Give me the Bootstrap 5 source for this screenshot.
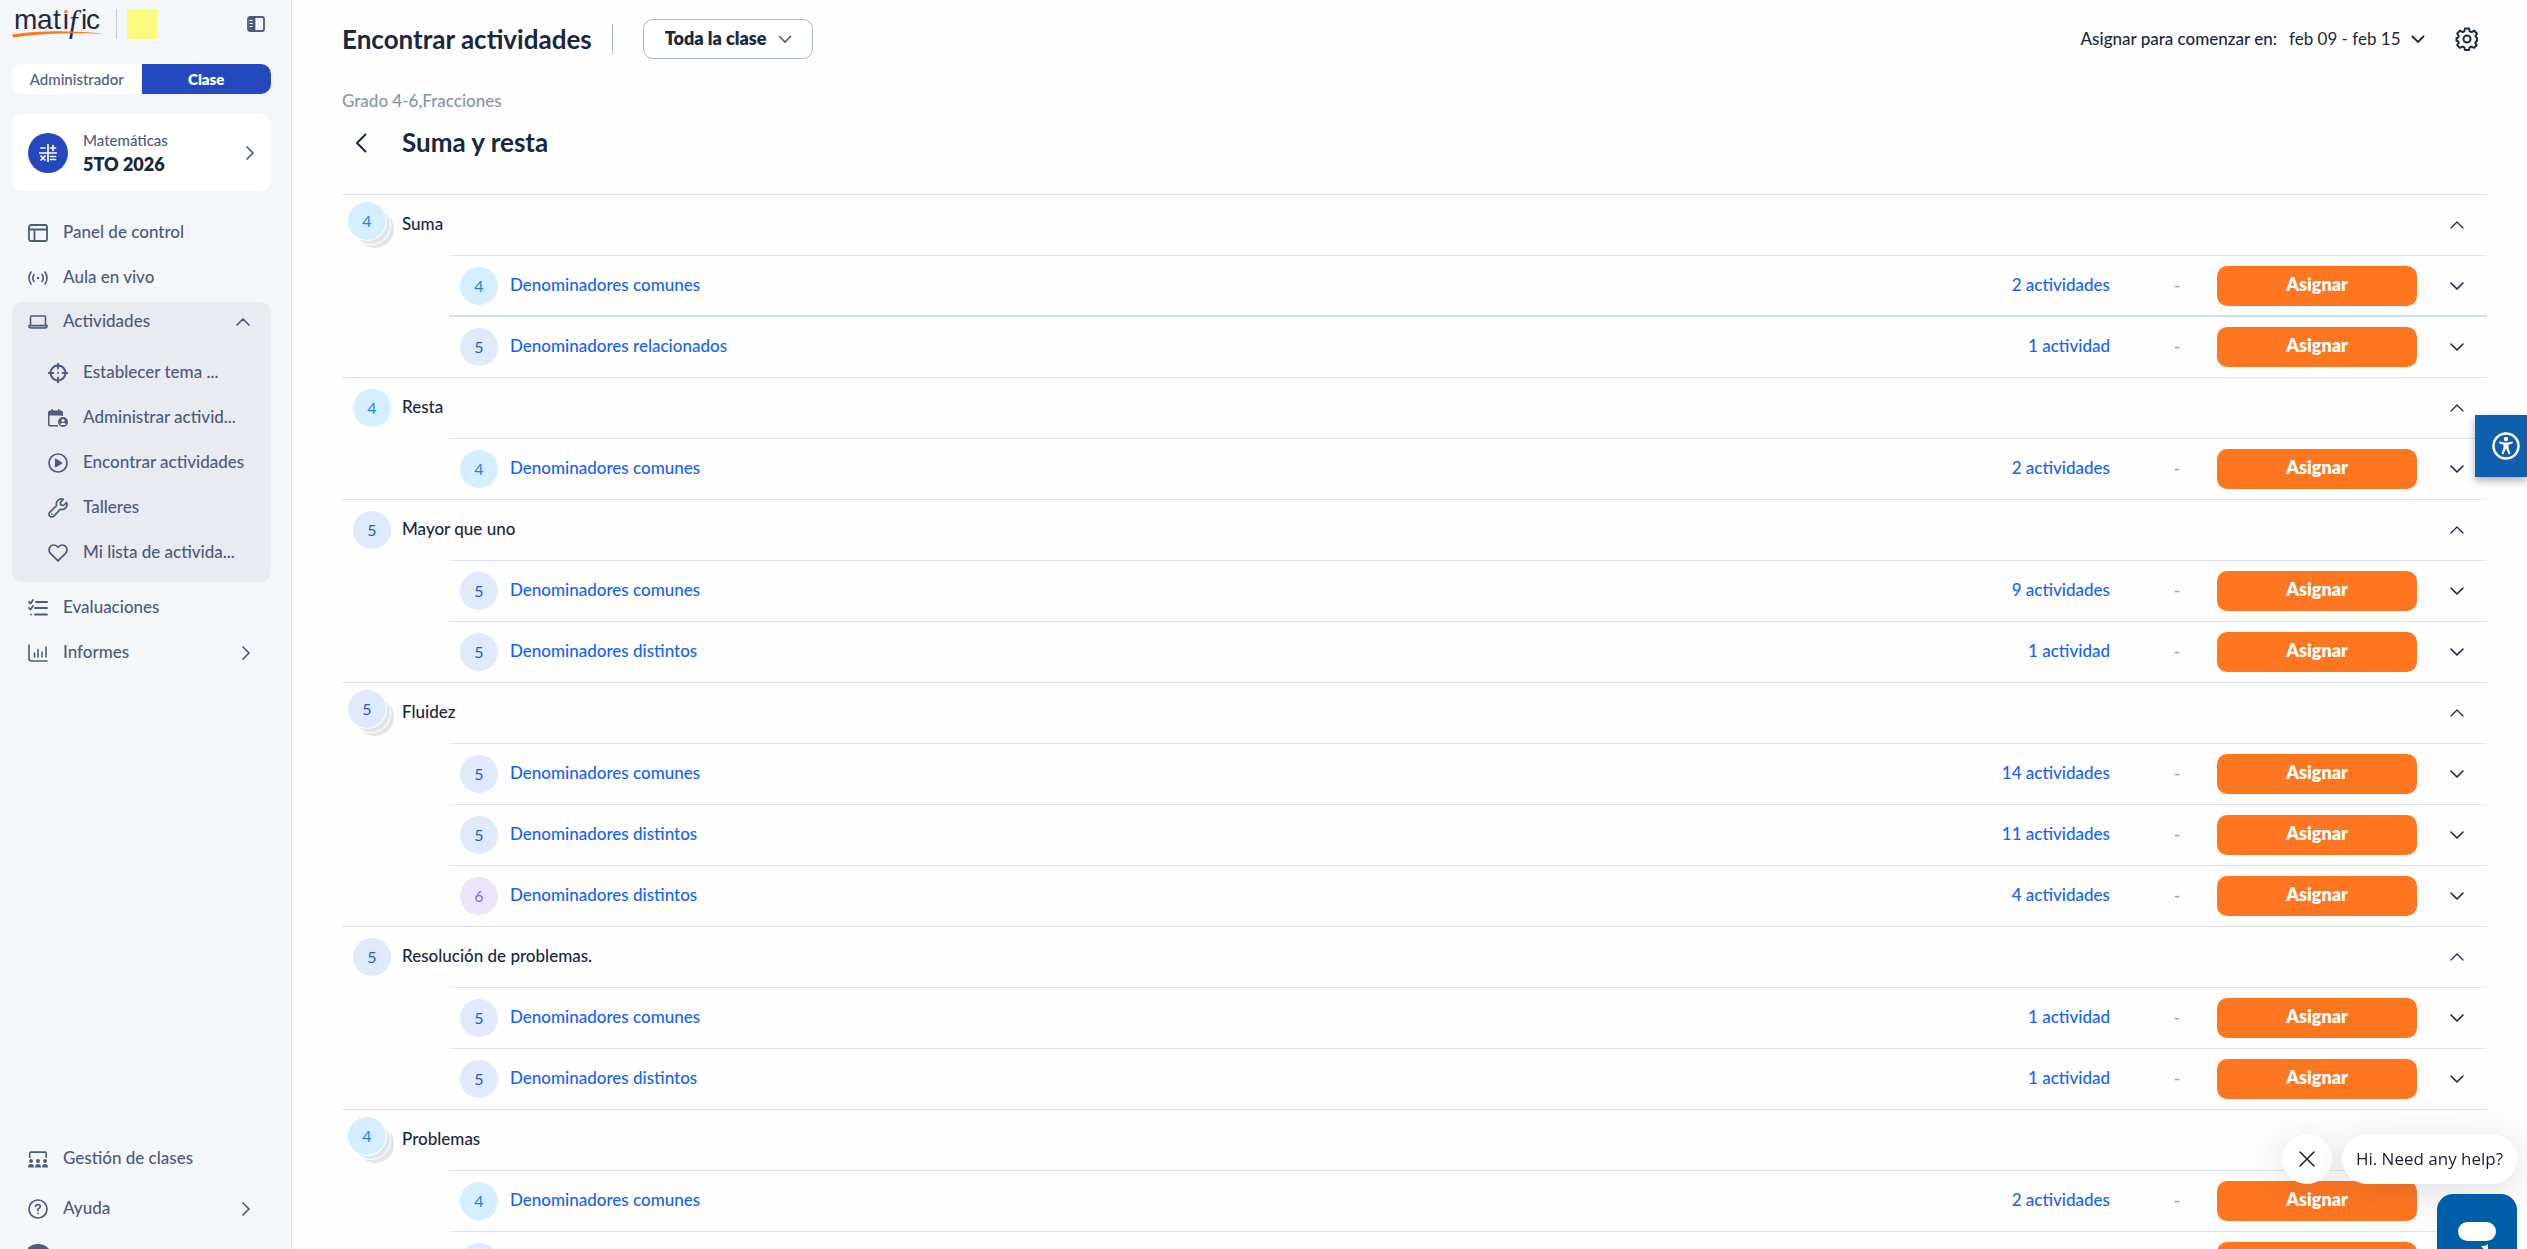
<!DOCTYPE html>
<html lang="es">
<head>
<meta charset="utf-8">
<meta name="viewport" content="width=device-width, initial-scale=1">
<title>Encontrar actividades</title>
<link href="https://cdn.jsdelivr.net/npm/bootstrap@5.3.0/dist/css/bootstrap.min.css" rel="stylesheet">
<style>
:root{--ink:#1a2740;--slate:#4d5b7c;--line:#dfe2e8;--royal:#2449be;--orange:#ff7620;--link:#1463fb}
body{font-family:Lato,"Open Sans",sans-serif;font-size:17px;font-weight:500;line-height:24px;color:var(--ink);background:#fefefe;height:100vh;overflow:hidden}
a{text-decoration:none}
svg{flex:none;display:block}
.ico{fill:none;stroke:currentColor;stroke-linecap:round;stroke-linejoin:round}
.ico:not([stroke-width]){stroke-width:2}
.side{width:292px;padding:9px 20px 0 12px;background:#f3f7fa;border-right:1px solid #dcdfe5;color:var(--slate);overflow:hidden}
.brand-row{height:30px;margin-bottom:25px}
.brand-row svg{overflow:visible}
.brand-rule{width:1px;height:30px;background:#c3c8d2;margin:0 10px 0 11px}
.school{width:30px;height:30px;background:#fafa7d}
.plain{border:0;background:none;padding:0;color:inherit}
.fold{margin:0 6px 0 auto}
.switcher{height:30px;border-radius:10px;overflow:hidden;margin-bottom:20px}
.switcher .btn{border-radius:0;padding:0;font-size:15px;line-height:30px;background:#fff;color:var(--slate);border:0;font-weight:500}
.switcher .btn.active{background:var(--royal);color:#fff;font-weight:800}
.class-card{height:77px;border-radius:10px;background:#fff;padding:0 17px 0 16px;margin-bottom:19px;color:var(--slate)}
.class-card small{font-size:15px}
.class-card strong{font-size:18px;font-weight:800;color:var(--ink)}
.disc{width:40px;height:40px;border-radius:50%;background:var(--royal);color:#fff;margin-right:15px}
.item{height:45px;padding:0 21px 0 16px;gap:15px;color:var(--slate)}
.item span,.line a,.ghead>span,.class-card .flex-column,.heading h2,.crumb{padding-bottom:2px}
.open-box{background:#e8ebf0;border-radius:10px;margin:2px 0 3px;padding-bottom:7px}
.open-box>.item:first-child{height:40px;margin-bottom:8px}
.item.sub{padding:0 14px 0 36px}
.foot{height:115px;overflow:hidden}
.foot .item{height:50px}
.main{padding:19px 40px 0 50px;overflow-y:auto;scrollbar-width:none}
.main::-webkit-scrollbar{display:none}
.top{height:40px;margin-bottom:30px}
h1,h2{font-size:26px;line-height:30px;font-weight:700;margin:0}
.top-rule{width:1px;height:30px;background:#aab6c9;margin:0 30px 0 20px}
.pick{appearance:none;width:170px;height:40px;border:1px solid #aab6c9;border-radius:10px;background:#fff url("data:image/svg+xml,%3Csvg xmlns='http://www.w3.org/2000/svg' width='14' height='9' fill='none' stroke='%234d5b7c' stroke-width='1.6'%3E%3Cpath d='M1 1l6 6 6-6'/%3E%3C/svg%3E") no-repeat right 20px center;padding:0 40px 2px 21px;font-size:18px;font-weight:800;color:var(--ink)}
.when{appearance:none;width:136px;height:40px;border:0;background:transparent url("data:image/svg+xml,%3Csvg xmlns='http://www.w3.org/2000/svg' width='14' height='9' fill='none' stroke='%231a2740' stroke-width='1.8'%3E%3Cpath d='M1 1l6 6 6-6'/%3E%3C/svg%3E") no-repeat right center;padding:0;color:var(--ink);margin:0 30px 0 12px}
.crumb a{color:#8397b1}
.heading{height:30px;margin:13px 0 36px;gap:35px;padding-left:13px}
.group{border-top:1px solid var(--line)}
.ghead{height:60px;padding-right:23px}
.gbadge{width:60px;padding-left:11px}
.gbadge.multi{padding-left:6px}
.multi .grade{margin-bottom:8px;box-shadow:0 0 0 1px #fefefe,4px 4px 0 0 #e2e5e8,4px 4px 0 1px #fefefe,8px 8px 0 0 #e2e5e8}
.grade{width:38px;height:38px;border-radius:50%;font-size:16px;font-weight:400;background:#dfeafd;color:#2558d2}
.g4{background:#d4efff;color:#2380ee}
.g6{background:#ede3fd;color:#7b6fe0}
.lines{margin-left:107px}
.line{height:61px;border-top:1px solid var(--line);padding:0 23px 0 11px}
.line.hov{border-top-color:#ccd9f2;box-shadow:0 -1px 0 #d9e2f3}
.line a{color:var(--link)}
.dash{width:107px;color:#97a0ae;text-align:center;padding-left:27px}
.assign{width:200px;height:40px;border-radius:10px;background:var(--orange);color:#fff;font-weight:800;font-size:18px;line-height:36px;padding:0 0 4px;border:0;margin-right:33px}
.assign:hover{background:#ec6812;color:#fff}
.access{position:fixed;right:0;top:415px;width:52px;height:62px;padding-left:10px;background:#0f5fac;color:#fff;box-shadow:0 4px 8px rgba(0,0,0,.3)}
.chat{position:fixed;right:10px;bottom:-25px;gap:10px;font-family:"Open Sans",sans-serif;font-size:17px;font-weight:400}
.talk{gap:10px}
.bubble,.shut{height:50px;border-radius:25px;background:#fff;box-shadow:0 8px 36px rgba(40,50,70,.15);color:#1c1c33}
.bubble{width:175px}.shut{width:50px}
.launch{width:80px;height:80px;border-radius:16px;background:#005ea8;padding-top:28px}
</style>
<script src="https://cdn.jsdelivr.net/npm/bootstrap@5.3.0/dist/js/bootstrap.bundle.min.js" defer></script>
</head>
<body class="d-flex">
<svg width="0" height="0" class="position-absolute" aria-hidden="true">
  <symbol id="down" viewBox="0 0 14 8"><path d="M1 1l6 6 6-6"/></symbol>
  <symbol id="up" viewBox="0 0 14 8"><path d="M1 7l6-6 6 6"/></symbol>
  <symbol id="right" viewBox="0 0 8 14"><path d="M1 1l6 6-6 6"/></symbol>
</svg>

<aside class="side d-flex flex-column flex-shrink-0 vh-100">
  <div class="brand-row d-flex flex-shrink-0">
    <a href="#" aria-label="matific"><svg width="93" height="30" viewBox="12 9 93 30">
      <g font-family="Liberation Sans" font-size="28" font-weight="400" fill="#1e2745"><text x="14 37 53 62" y="29">matı</text><text x="81 86" y="29">ic</text><text x="69" y="32" font-family="Liberation Serif" font-style="italic" font-size="31">f</text></g>
      <circle cx="66" cy="11.600" r="1.700" fill="#ff7620"/>
      <path d="M12 34.500C38 30.500 75 30 105 34C77 32.500 42 33.500 13 37.500Z" fill="#ff7620"/></svg></a>
    <span class="brand-rule"></span><span class="school"></span>
    <button class="plain fold" aria-label="Contraer menú"><svg class="ico" width="18" height="16" viewBox="0 0 18 16" stroke-width="1.800"><rect x="1" y="1" width="16" height="14" rx="2"/><path d="M2 1.500h5v13H2z" fill="currentColor" stroke="none"/><path d="M7.500 1v14"/><path d="M3 4.500h2M3 7.500h2M3 10.500h2" stroke="#fff" stroke-width="1.200"/></svg></button>
  </div>
  <div class="switcher d-flex flex-shrink-0"><button class="btn w-50">Administrador</button><button class="btn w-50 active">Clase</button></div>
  <a href="#" class="class-card d-flex align-items-center flex-shrink-0">
    <span class="disc d-flex align-items-center justify-content-center"><svg class="ico" width="18" height="18" viewBox="0 0 18 18" stroke-width="1.700"><path d="M9 0v18M0 9h18M2 4h4M11.500 4h5M14 1.500v5M2 12l4 4M6 12l-4 4M11.500 12.500h5M11.500 15.500h5"/></svg></span>
    <span class="d-flex flex-column flex-grow-1"><small>Matemáticas</small><strong>5TO 2026</strong></span>
    <svg class="ico" width="8" height="14" stroke-width="1.700"><use href="#right"/></svg>
  </a>
  <nav class="d-flex flex-column">
    <a href="#" class="item d-flex align-items-center"><svg class="ico" width="20" height="18" viewBox="0 0 20 18" stroke-width="1.800"><rect x="1" y="1" width="18" height="16" rx="2"/><path d="M1 5.500h18M6.500 5.500V17"/></svg><span>Panel de control</span></a>
    <a href="#" class="item d-flex align-items-center"><svg class="ico" width="20" height="14" viewBox="0 0 20 14" stroke-width="1.600"><path d="M3 1Q-1 7 3 13M6 3.500Q3.500 7 6 10.500M14 3.500q2.500 3.500 0 7M17 1q4 6 0 12"/><circle cx="10" cy="7" r="1.200" fill="currentColor" stroke="none"/></svg><span>Aula en vivo</span></a>
    <div class="open-box">
      <a href="#" class="item d-flex align-items-center"><svg class="ico" width="20" height="14" viewBox="0 0 20 14" stroke-width="1.600"><path d="M2.500 10V2Q2.500 1 3.500 1h13q1 0 1 1v8"/><path d="M1 10.500h18q0 2.500-2 2.500H3Q1 13 1 10.500Z" fill="#a9b0c0"/></svg><span class="flex-grow-1">Actividades</span><svg class="ico" width="14" height="8" stroke-width="1.700"><use href="#up"/></svg></a>
      <a href="#" class="item sub d-flex align-items-center"><svg class="ico" width="20" height="20" viewBox="0 0 20 20"><circle cx="10" cy="10" r="7.500"/><path d="M10 .8v4.500M10 14.700v4.500M.8 10h4.500M14.700 10h4.500M10 10h0"/></svg><span class="text-truncate">Establecer tema ...</span></a>
      <a href="#" class="item sub d-flex align-items-center"><svg width="20" height="18" viewBox="0 0 20 18" fill="currentColor"><path d="M2 1.500h1.500V0H5v1.500h5V0h1.500v1.500H13q2 0 2 2V7h-1.500v-.5h-12V15q0 1 1 1H10v1.500H2q-2 0-2-2v-12q0-2 2-2Z"/><circle cx="15" cy="13" r="5"/><circle cx="15" cy="11.500" r="1.600" fill="#e8ebf0"/><path d="M12.300 16q0-2.200 2.700-2.200t2.700 2.200Z" fill="#e8ebf0"/></svg><span class="text-truncate">Administrar activid...</span></a>
      <a href="#" class="item sub d-flex align-items-center"><svg class="ico" width="20" height="20" viewBox="0 0 20 20" stroke-width="1.700"><circle cx="10" cy="10" r="9"/><path d="M7.700 6.500v7l5.600-3.500Z" fill="currentColor"/></svg><span>Encontrar actividades</span></a>
      <a href="#" class="item sub d-flex align-items-center"><svg class="ico" width="20" height="20" viewBox="0 0 20 20" stroke-width="1.700"><path d="M18.600 4.500L15.500 7.500 12.700 6.900 12.300 4.300 15.300 1.300Q12 .2 9.700 2.500 7.800 4.500 8.600 7.500L1.700 14.300Q.2 16.300 1.700 18.200 3.600 19.700 5.600 18.300L12.300 11.300Q15.500 12.200 17.700 9.900 19.800 7.500 18.600 4.500Z"/><path d="M3.800 16.200h0"/></svg><span>Talleres</span></a>
      <a href="#" class="item sub d-flex align-items-center"><svg class="ico" width="20" height="18" viewBox="0 0 20 18" stroke-width="1.700"><path d="M10 16.800L2.300 9.200Q.2 6.500 1.600 3.600 3 1 5.800 1 8.300 1 10 3.300 11.700 1 14.200 1 17 1 18.400 3.600 19.800 6.500 17.700 9.200Z"/></svg><span class="text-truncate">Mi lista de activida...</span></a>
    </div>
    <a href="#" class="item d-flex align-items-center"><svg class="ico" width="20" height="17" viewBox="0 0 20 17" stroke-width="1.800"><path d="M8 3h11M7 9h12M7 15.500h12M1 3l1.500 1.500L5 1M1 9l1.500 1.500L5 7M3 15.500h0"/></svg><span>Evaluaciones</span></a>
    <a href="#" class="item d-flex align-items-center"><svg class="ico" width="20" height="18" viewBox="0 0 20 18" stroke-width="1.600"><path d="M1 1v13.500Q1 17 3.500 17H19M6.500 9v4M10 5.500V13M14 8v5M18 3v10"/></svg><span class="flex-grow-1">Informes</span><svg class="ico" width="8" height="14" stroke-width="1.700"><use href="#right"/></svg></a>
  </nav>
  <div class="foot mt-auto flex-shrink-0">
    <a href="#" class="item d-flex align-items-center"><svg width="20" height="17" viewBox="0 0 20 17" fill="currentColor"><path d="M1 7V2Q1 .3 2.700.3h14.600Q19 .3 19 2v5h-1.500V2h-15v5Z"/><circle cx="3" cy="10" r="2"/><circle cx="10" cy="10" r="2"/><circle cx="17" cy="10" r="2"/><path d="M0 16.500q0-3.500 3-3.500t3 3.500ZM7 16.500Q7 13 10 13t3 3.500ZM14 16.500q0-3.500 3-3.500t3 3.500Z"/></svg><span>Gestión de clases</span></a>
    <a href="#" class="item d-flex align-items-center"><svg class="ico" width="20" height="20" viewBox="0 0 20 20" stroke-width="1.700"><circle cx="10" cy="10" r="9"/><path d="M7.600 7.500Q7.800 5.600 10 5.600T12.400 7.600Q12.400 8.900 10 10v1.400M10 14.300h0"/></svg><span class="flex-grow-1">Ayuda</span><svg class="ico" width="8" height="14" stroke-width="1.700"><use href="#right"/></svg></a>
    <a href="#" class="item d-flex align-items-center" aria-label="Perfil"><svg width="24" height="30" viewBox="2 0 24 30"><circle cx="12" cy="15" r="15" fill="currentColor"/></svg></a>
  </div>
</aside>

<main class="main flex-grow-1 vh-100">
  <header class="top d-flex align-items-center">
    <h1>Encontrar actividades</h1><span class="top-rule"></span>
    <select class="pick" aria-label="Grupo"><option>Toda la clase</option></select>
    <label class="ms-auto" for="when">Asignar para comenzar en:</label>
    <select class="when" id="when"><option>feb 09 - feb 15</option></select>
    <button class="plain me-2" aria-label="Ajustes"><svg class="ico" width="24" height="24" viewBox="0 0 24 24"><path d="M10 1.500h4l.7 2.800 2 .9 2.600-1.500 2.700 2.800-1.500 2.500.8 1.500.7.500v3l-1 .5-.8 1.200 1.400 2.500-2.600 2.700-2.500-1.400-1.800.8-.7 2.700h-4l-.7-2.700-1.900-.8-2.500 1.400-2.700-2.700 1.500-2.500-.7-1.500-1.500-.4v-2.600l1.500-.6.700-1.500-1.500-2.600 2.700-2.800 2.600 1.500 1.800-.9Z"/><circle cx="12" cy="12" r="3.500"/></svg></button>
  </header>
  <nav class="crumb"><a href="#">Grado 4-6,Fracciones</a></nav>
  <div class="heading d-flex align-items-center"><a href="#" aria-label="Volver" class="text-reset"><svg class="ico" width="12" height="20" viewBox="0 0 12 20"><path d="M10.500 1.500L2 10l8.500 8.500"/></svg></a><h2>Suma y resta</h2></div>

  <section class="group">
    <div class="ghead d-flex align-items-center"><div class="gbadge multi"><span class="grade g4 d-flex align-items-center justify-content-center">4</span></div><span class="flex-grow-1">Suma</span><button class="plain" aria-label="Contraer"><svg class="ico" width="14" height="8" stroke-width="1.200"><use href="#up"/></svg></button></div>
    <div class="lines">
      <div class="line d-flex align-items-center"><span class="grade g4 d-flex align-items-center justify-content-center me-2">4</span><a href="#" class="flex-grow-1 ms-1">Denominadores comunes</a><a href="#">2 actividades</a><span class="dash">-</span><button class="btn assign">Asignar</button><button class="plain" aria-label="Expandir"><svg class="ico" width="14" height="8" stroke-width="1.600"><use href="#down"/></svg></button></div>
      <div class="line hov d-flex align-items-center"><span class="grade d-flex align-items-center justify-content-center me-2">5</span><a href="#" class="flex-grow-1 ms-1">Denominadores relacionados</a><a href="#">1 actividad</a><span class="dash">-</span><button class="btn assign">Asignar</button><button class="plain" aria-label="Expandir"><svg class="ico" width="14" height="8" stroke-width="1.600"><use href="#down"/></svg></button></div>
    </div>
  </section>
  <section class="group">
    <div class="ghead d-flex align-items-center"><div class="gbadge"><span class="grade g4 d-flex align-items-center justify-content-center">4</span></div><span class="flex-grow-1">Resta</span><button class="plain" aria-label="Contraer"><svg class="ico" width="14" height="8" stroke-width="1.200"><use href="#up"/></svg></button></div>
    <div class="lines">
      <div class="line d-flex align-items-center"><span class="grade g4 d-flex align-items-center justify-content-center me-2">4</span><a href="#" class="flex-grow-1 ms-1">Denominadores comunes</a><a href="#">2 actividades</a><span class="dash">-</span><button class="btn assign">Asignar</button><button class="plain" aria-label="Expandir"><svg class="ico" width="14" height="8" stroke-width="1.600"><use href="#down"/></svg></button></div>
    </div>
  </section>
  <section class="group">
    <div class="ghead d-flex align-items-center"><div class="gbadge"><span class="grade d-flex align-items-center justify-content-center">5</span></div><span class="flex-grow-1">Mayor que uno</span><button class="plain" aria-label="Contraer"><svg class="ico" width="14" height="8" stroke-width="1.200"><use href="#up"/></svg></button></div>
    <div class="lines">
      <div class="line d-flex align-items-center"><span class="grade d-flex align-items-center justify-content-center me-2">5</span><a href="#" class="flex-grow-1 ms-1">Denominadores comunes</a><a href="#">9 actividades</a><span class="dash">-</span><button class="btn assign">Asignar</button><button class="plain" aria-label="Expandir"><svg class="ico" width="14" height="8" stroke-width="1.600"><use href="#down"/></svg></button></div>
      <div class="line d-flex align-items-center"><span class="grade d-flex align-items-center justify-content-center me-2">5</span><a href="#" class="flex-grow-1 ms-1">Denominadores distintos</a><a href="#">1 actividad</a><span class="dash">-</span><button class="btn assign">Asignar</button><button class="plain" aria-label="Expandir"><svg class="ico" width="14" height="8" stroke-width="1.600"><use href="#down"/></svg></button></div>
    </div>
  </section>
  <section class="group">
    <div class="ghead d-flex align-items-center"><div class="gbadge multi"><span class="grade d-flex align-items-center justify-content-center">5</span></div><span class="flex-grow-1">Fluidez</span><button class="plain" aria-label="Contraer"><svg class="ico" width="14" height="8" stroke-width="1.200"><use href="#up"/></svg></button></div>
    <div class="lines">
      <div class="line d-flex align-items-center"><span class="grade d-flex align-items-center justify-content-center me-2">5</span><a href="#" class="flex-grow-1 ms-1">Denominadores comunes</a><a href="#">14 actividades</a><span class="dash">-</span><button class="btn assign">Asignar</button><button class="plain" aria-label="Expandir"><svg class="ico" width="14" height="8" stroke-width="1.600"><use href="#down"/></svg></button></div>
      <div class="line d-flex align-items-center"><span class="grade d-flex align-items-center justify-content-center me-2">5</span><a href="#" class="flex-grow-1 ms-1">Denominadores distintos</a><a href="#">11 actividades</a><span class="dash">-</span><button class="btn assign">Asignar</button><button class="plain" aria-label="Expandir"><svg class="ico" width="14" height="8" stroke-width="1.600"><use href="#down"/></svg></button></div>
      <div class="line d-flex align-items-center"><span class="grade g6 d-flex align-items-center justify-content-center me-2">6</span><a href="#" class="flex-grow-1 ms-1">Denominadores distintos</a><a href="#">4 actividades</a><span class="dash">-</span><button class="btn assign">Asignar</button><button class="plain" aria-label="Expandir"><svg class="ico" width="14" height="8" stroke-width="1.600"><use href="#down"/></svg></button></div>
    </div>
  </section>
  <section class="group">
    <div class="ghead d-flex align-items-center"><div class="gbadge"><span class="grade d-flex align-items-center justify-content-center">5</span></div><span class="flex-grow-1">Resolución de problemas.</span><button class="plain" aria-label="Contraer"><svg class="ico" width="14" height="8" stroke-width="1.200"><use href="#up"/></svg></button></div>
    <div class="lines">
      <div class="line d-flex align-items-center"><span class="grade d-flex align-items-center justify-content-center me-2">5</span><a href="#" class="flex-grow-1 ms-1">Denominadores comunes</a><a href="#">1 actividad</a><span class="dash">-</span><button class="btn assign">Asignar</button><button class="plain" aria-label="Expandir"><svg class="ico" width="14" height="8" stroke-width="1.600"><use href="#down"/></svg></button></div>
      <div class="line d-flex align-items-center"><span class="grade d-flex align-items-center justify-content-center me-2">5</span><a href="#" class="flex-grow-1 ms-1">Denominadores distintos</a><a href="#">1 actividad</a><span class="dash">-</span><button class="btn assign">Asignar</button><button class="plain" aria-label="Expandir"><svg class="ico" width="14" height="8" stroke-width="1.600"><use href="#down"/></svg></button></div>
    </div>
  </section>
  <section class="group">
    <div class="ghead d-flex align-items-center"><div class="gbadge multi"><span class="grade g4 d-flex align-items-center justify-content-center">4</span></div><span class="flex-grow-1">Problemas</span></div>
    <div class="lines">
      <div class="line d-flex align-items-center"><span class="grade g4 d-flex align-items-center justify-content-center me-2">4</span><a href="#" class="flex-grow-1 ms-1">Denominadores comunes</a><a href="#">2 actividades</a><span class="dash">-</span><button class="btn assign">Asignar</button><button class="plain" aria-label="Expandir"><svg class="ico" width="14" height="8" stroke-width="1.600"><use href="#down"/></svg></button></div>
      <div class="line d-flex align-items-center"><span class="grade d-flex align-items-center justify-content-center me-2"></span><span class="flex-grow-1"></span><button class="btn assign" aria-label="Asignar"></button><button class="plain" aria-label="Expandir"><svg class="ico" width="14" height="8" stroke-width="1.600"><use href="#down"/></svg></button></div>
    </div>
  </section>
</main>

<button class="access plain d-flex align-items-center justify-content-center" aria-label="Accesibilidad"><svg width="28" height="28" viewBox="0 0 28 28" fill="#fff"><circle cx="14" cy="14" r="12.500" fill="none" stroke="#fff" stroke-width="2.500"/><circle cx="14" cy="7" r="2.200"/><path d="M7.500 9.500L12 10.500h4l4.500-1 .4 1.800-4.400 1.400v3l2 6-1.900.6L14.300 17h-.6l-2.300 5.300-1.900-.6 2-6v-3L7.100 11.300Z"/></svg></button>
<div class="chat d-flex flex-column align-items-end">
  <div class="talk d-flex"><button class="shut plain d-flex align-items-center justify-content-center" aria-label="Cerrar"><svg class="ico" width="16" height="16" viewBox="0 0 16 16" stroke-width="1.500"><path d="M1 1l14 14M15 1L1 15"/></svg></button><div class="bubble d-flex align-items-center justify-content-center text-nowrap">Hi. Need any help?</div></div>
  <button class="launch plain d-flex justify-content-center" aria-label="Chat"><svg width="38" height="32" viewBox="0 0 38 32" fill="#fff"><rect width="38" height="19" rx="9.500"/><path d="M23 24q5 0 7-2v10Z"/></svg></button>
</div>
</body>
</html>
